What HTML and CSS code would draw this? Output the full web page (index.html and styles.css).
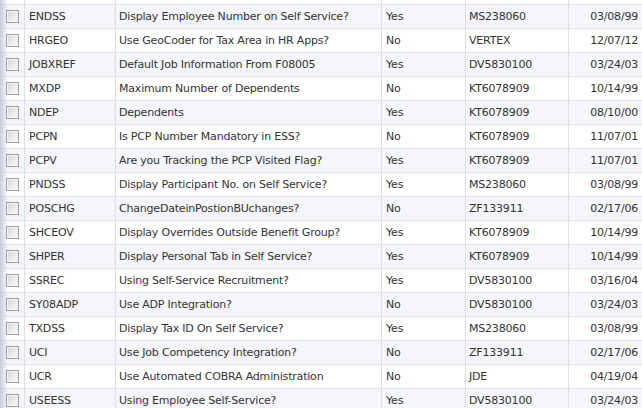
FILE: index.html
```html
<!DOCTYPE html>
<html>
<head>
<meta charset="utf-8">
<link rel="stylesheet" href="styles.css">
</head>
<body>
<div class="grid">
  <div class="row top"><div class="c c0"></div><div class="c c1"></div><div class="c c2"></div><div class="c c3"></div><div class="c c4"></div><div class="c c5"></div></div>
  <div class="row alt"><div class="c c0"><span class="cb"></span></div><div class="c c1">ENDSS</div><div class="c c2">Display Employee Number on Self Service?</div><div class="c c3">Yes</div><div class="c c4">MS238060</div><div class="c c5">03/08/99</div></div>
  <div class="row"><div class="c c0"><span class="cb"></span></div><div class="c c1">HRGEO</div><div class="c c2">Use GeoCoder for Tax Area in HR Apps?</div><div class="c c3">No</div><div class="c c4">VERTEX</div><div class="c c5">12/07/12</div></div>
  <div class="row alt"><div class="c c0"><span class="cb"></span></div><div class="c c1">JOBXREF</div><div class="c c2">Default Job Information From F08005</div><div class="c c3">Yes</div><div class="c c4">DV5830100</div><div class="c c5">03/24/03</div></div>
  <div class="row"><div class="c c0"><span class="cb"></span></div><div class="c c1">MXDP</div><div class="c c2">Maximum Number of Dependents</div><div class="c c3">No</div><div class="c c4">KT6078909</div><div class="c c5">10/14/99</div></div>
  <div class="row alt"><div class="c c0"><span class="cb"></span></div><div class="c c1">NDEP</div><div class="c c2">Dependents</div><div class="c c3">Yes</div><div class="c c4">KT6078909</div><div class="c c5">08/10/00</div></div>
  <div class="row"><div class="c c0"><span class="cb"></span></div><div class="c c1">PCPN</div><div class="c c2">Is PCP Number Mandatory in ESS?</div><div class="c c3">No</div><div class="c c4">KT6078909</div><div class="c c5">11/07/01</div></div>
  <div class="row alt"><div class="c c0"><span class="cb"></span></div><div class="c c1">PCPV</div><div class="c c2">Are you Tracking the PCP Visited Flag?</div><div class="c c3">Yes</div><div class="c c4">KT6078909</div><div class="c c5">11/07/01</div></div>
  <div class="row"><div class="c c0"><span class="cb"></span></div><div class="c c1">PNDSS</div><div class="c c2">Display Participant No. on Self Service?</div><div class="c c3">Yes</div><div class="c c4">MS238060</div><div class="c c5">03/08/99</div></div>
  <div class="row alt"><div class="c c0"><span class="cb"></span></div><div class="c c1">POSCHG</div><div class="c c2">ChangeDateinPostionBUchanges?</div><div class="c c3">No</div><div class="c c4">ZF133911</div><div class="c c5">02/17/06</div></div>
  <div class="row"><div class="c c0"><span class="cb"></span></div><div class="c c1">SHCEOV</div><div class="c c2">Display Overrides Outside Benefit Group?</div><div class="c c3">Yes</div><div class="c c4">KT6078909</div><div class="c c5">10/14/99</div></div>
  <div class="row alt"><div class="c c0"><span class="cb"></span></div><div class="c c1">SHPER</div><div class="c c2">Display Personal Tab in Self Service?</div><div class="c c3">Yes</div><div class="c c4">KT6078909</div><div class="c c5">10/14/99</div></div>
  <div class="row"><div class="c c0"><span class="cb"></span></div><div class="c c1">SSREC</div><div class="c c2">Using Self-Service Recruitment?</div><div class="c c3">Yes</div><div class="c c4">DV5830100</div><div class="c c5">03/16/04</div></div>
  <div class="row alt"><div class="c c0"><span class="cb"></span></div><div class="c c1">SY08ADP</div><div class="c c2">Use ADP Integration?</div><div class="c c3">No</div><div class="c c4">DV5830100</div><div class="c c5">03/24/03</div></div>
  <div class="row"><div class="c c0"><span class="cb"></span></div><div class="c c1">TXDSS</div><div class="c c2">Display Tax ID On Self Service?</div><div class="c c3">Yes</div><div class="c c4">MS238060</div><div class="c c5">03/08/99</div></div>
  <div class="row alt"><div class="c c0"><span class="cb"></span></div><div class="c c1">UCI</div><div class="c c2">Use Job Competency Integration?</div><div class="c c3">No</div><div class="c c4">ZF133911</div><div class="c c5">02/17/06</div></div>
  <div class="row"><div class="c c0"><span class="cb"></span></div><div class="c c1">UCR</div><div class="c c2">Use Automated COBRA Administration</div><div class="c c3">No</div><div class="c c4">JDE</div><div class="c c5">04/19/04</div></div>
  <div class="row alt"><div class="c c0"><span class="cb"></span></div><div class="c c1">USEESS</div><div class="c c2">Using Employee Self-Service?</div><div class="c c3">Yes</div><div class="c c4">DV5830100</div><div class="c c5">03/24/03</div></div>
</div>
</body>
</html>
```
FILE: styles.css
```css
html, body {
  margin: 0;
  padding: 0;
  background: #ffffff;
  overflow: hidden;
}
.grid {
  width: 642px;
  height: 408px;
  overflow: hidden;
  position: relative;
  font-family: "DejaVu Sans", sans-serif;
  font-size: 11px;
  letter-spacing: -0.2px;
  color: #333333;
}
.grid::before {
  content: "";
  position: absolute;
  left: 0;
  top: 0;
  bottom: 0;
  width: 8px;
  background: linear-gradient(to right, rgba(190,196,208,0.85), rgba(255,255,255,0));
  z-index: 2;
}
.row {
  display: grid;
  grid-template-columns: 25px 91px 266px 84px 103px 73px;
  height: 24px;
  box-sizing: border-box;
  border-bottom: 1px solid #e1e3ea;
  background: #ffffff;
}
.row.top {
  height: 5px;
}
.row.alt {
  background: #f4f6fb;
}
.c {
  box-sizing: border-box;
  border-right: 1px solid #dcdfe7;
  display: flex;
  align-items: center;
  white-space: nowrap;
  overflow: hidden;
  padding: 0 3px;
}
.c0 { padding-left: 6px; }
.c1 { padding-left: 4px; }
.c3 { padding-left: 4px; }
.c5 { justify-content: flex-end; padding-right: 4px; border-right: none; }
.cb {
  width: 13px;
  height: 13px;
  box-sizing: border-box;
  border: 1px solid #9c9c9c;
  box-shadow: inset 0 0 0 1px #f6f6f6;
  background: linear-gradient(135deg, #d2d2d2 0%, #ececec 55%, #fdfdfd 100%);
}
```
